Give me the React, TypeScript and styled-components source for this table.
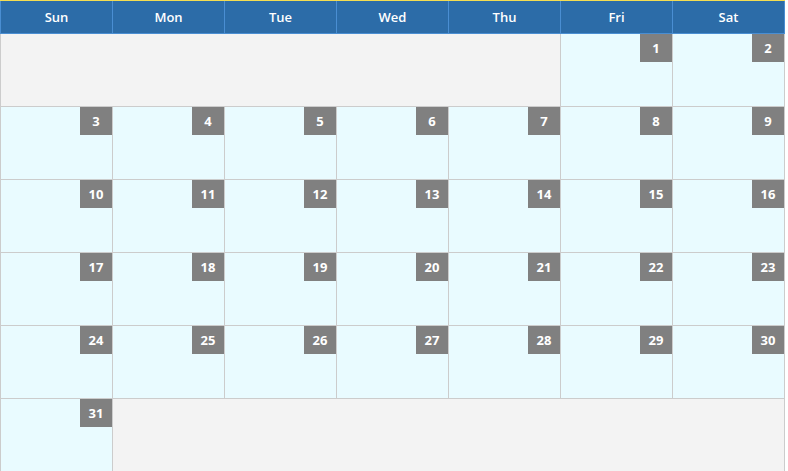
import React from "react";
import styled, { createGlobalStyle } from "styled-components";

const Global = createGlobalStyle`
  html, body { margin: 0; padding: 0; background: #ffffff; }
  body { font-family: "Open Sans", "Liberation Sans", sans-serif; }
`;

const Calendar = styled.div`
  width: 785px;
  border-top: 1px solid #f4dd52;
`;

const HeaderRow = styled.div`
  display: grid;
  grid-template-columns: repeat(7, 112px);
  background: #2c6ca8;
  border-left: 1px solid #4a8ed2;
  width: 784px;
`;

const HeaderCell = styled.div`
  height: 32px;
  border-right: 1px solid #4a8ed2;
  border-bottom: 1px solid #4a8ed2;
  display: flex;
  align-items: center;
  justify-content: center;
  color: #ffffff;
  font-size: 13px;
  font-weight: 600;
`;

const Body = styled.div`
  display: grid;
  grid-template-columns: repeat(7, 112px);
  grid-auto-rows: 73px;
  border-left: 1px solid #cccccc;
  width: 784px;
`;

const Cell = styled.div<{ $span?: number; $empty?: boolean }>`
  grid-column: span ${(p) => p.$span ?? 1};
  background: ${(p) => (p.$empty ? "#f3f3f3" : "#e9fbff")};
  border-right: 1px solid #cccccc;
  border-bottom: 1px solid #cccccc;
  display: flex;
  justify-content: flex-end;
  align-items: flex-start;
`;

const DayBadge = styled.div`
  width: 32px;
  height: 28px;
  background: #808080;
  color: #ffffff;
  font-size: 13px;
  font-weight: 700;
  display: flex;
  align-items: center;
  justify-content: center;
`;

const days = ["Sun", "Mon", "Tue", "Wed", "Thu", "Fri", "Sat"];

export default function App() {
  const dates = Array.from({ length: 31 }, (_, i) => i + 1);
  return (
    <>
      <Global />
      <Calendar>
        <HeaderRow>
          {days.map((d) => (
            <HeaderCell key={d}>{d}</HeaderCell>
          ))}
        </HeaderRow>
        <Body>
          <Cell $span={5} $empty />
          {dates.map((n) => (
            <Cell key={n}>
              <DayBadge>{n}</DayBadge>
            </Cell>
          ))}
          <Cell $span={6} $empty />
        </Body>
      </Calendar>
    </>
  );
}
